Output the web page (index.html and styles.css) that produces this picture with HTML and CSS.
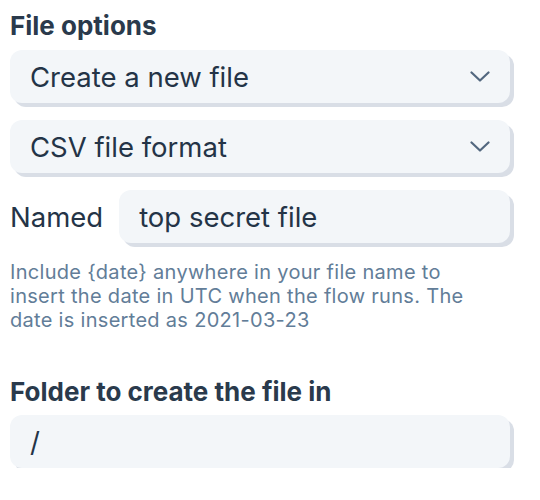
FILE: index.html
```html
<!DOCTYPE html>
<html>
<head>
<meta charset="utf-8">
<link rel="stylesheet" href="styles.css">
</head>
<body>
<div class="form">
  <h2 class="heading">File options</h2>
  <div class="field select">
    <span>Create a new file</span>
    <svg class="chev" width="20" height="12" viewBox="0 0 20 12"><path d="M1.5 1.5 L10 9.5 L18.5 1.5" fill="none" stroke="#52677f" stroke-width="2.2" stroke-linecap="round" stroke-linejoin="round"/></svg>
  </div>
  <div class="field select">
    <span>CSV file format</span>
    <svg class="chev" width="20" height="12" viewBox="0 0 20 12"><path d="M1.5 1.5 L10 9.5 L18.5 1.5" fill="none" stroke="#52677f" stroke-width="2.2" stroke-linecap="round" stroke-linejoin="round"/></svg>
  </div>
  <div class="named-row">
    <label class="label">Named</label>
    <div class="field input">top secret file</div>
  </div>
  <p class="help">Include {date} anywhere in your file name to insert the date in UTC when the flow runs. The date is inserted as 2021-03-23</p>
  <h2 class="heading folder-heading">Folder to create the file in</h2>
  <div class="field input">/</div>
</div>
</body>
</html>
```
FILE: styles.css
```css
* { box-sizing: border-box; }
body {
  margin: 0;
  background: #ffffff;
  font-family: Inter, "Noto Sans", sans-serif;
  color: #243447;
}
.form {
  width: 500px;
  padding: 11px 0 0 10px;
  display: flex;
  flex-direction: column;
  box-sizing: content-box;
}
.heading {
  margin: 0;
  font-size: 26px;
  font-weight: 700;
  line-height: 30px;
  color: #2a3a4c;
}
.field {
  background: #f3f6f9;
  border-radius: 12px;
  box-shadow: 4px 4px 0 #d9dee6;
  height: 53px;
  display: flex;
  align-items: center;
  padding: 0 20px;
  font-size: 27.5px;
  color: #243447;
}
.select {
  justify-content: space-between;
  margin-top: 9px;
  margin-bottom: 17px;
}
.select + .select { margin-top: 0; }
.named-row {
  display: flex;
  align-items: center;
  gap: 16px;
}
.label {
  font-size: 27.5px;
  color: #243447;
}
.named-row .input { flex: 1; }
.help {
  margin: 17px 0 0 0;
  max-width: 472px;
  font-size: 20px;
  letter-spacing: 0.3px;
  line-height: 24px;
  color: #627d98;
}
.folder-heading { margin-top: 45px; }
.folder-heading + .input { margin-top: 8px; }
```
